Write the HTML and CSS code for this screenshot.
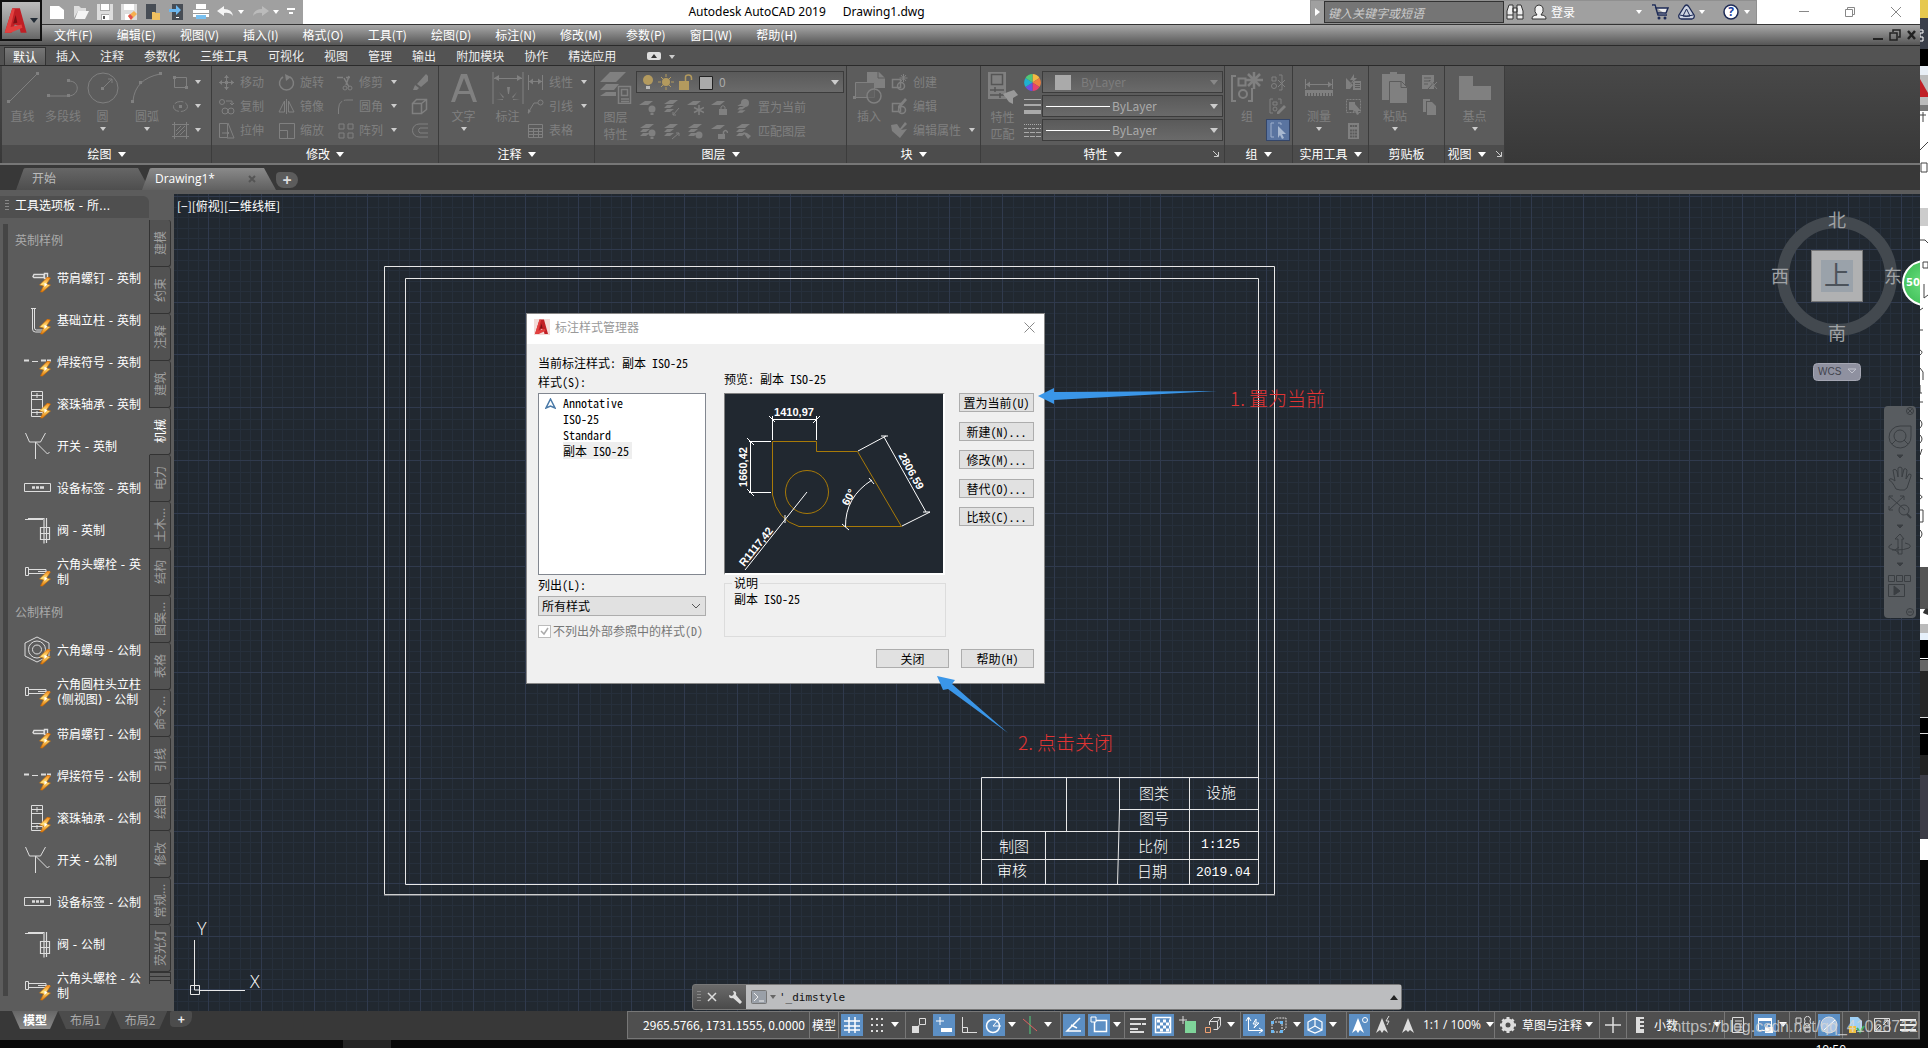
FILE: index.html
```html
<!DOCTYPE html>
<html lang="zh-CN">
<head>
<meta charset="utf-8">
<title>Autodesk AutoCAD 2019 - Drawing1.dwg</title>
<link rel="stylesheet" href="styles.css">
</head>
<body>
<svg class="defs" aria-hidden="true">
  <defs>
    <linearGradient id="gold" x1="0" y1="0" x2="0" y2="1"><stop offset="0" stop-color="#f08010"/><stop offset=".45" stop-color="#ffe27a"/><stop offset="1" stop-color="#e07808"/></linearGradient>
    <symbol id="bolt" viewBox="0 0 13 16"><path d="M9 0L1 8l4 1-3 6 2 0 8-7-4-1 4-6z" fill="url(#gold)" stroke="#c96a00" stroke-width=".6"/><path d="M6 6l3 1-3 3z" fill="#fff"/></symbol>
    <symbol id="screw" viewBox="0 0 28 28"><path d="M10 4.500h10v3H10l-1-1zM20.500 3.500h3v5h-3z" fill="none" stroke="#ddd" stroke-width="1.400"/></symbol>
    <symbol id="anchor" viewBox="0 0 28 28"><path d="M8.500 2v21q0 3 3 3h8M10.500 2v20q0 2 2 2h8M7 2.500h5" fill="none" stroke="#ddd"/></symbol>
    <symbol id="weld" viewBox="0 0 28 28"><path d="M0 12.500h5M17 12.500h5M23 12.500h4" stroke="#ddd" stroke-width="2" fill="none"/><path d="M8 13.500h6" stroke="#ddd"/></symbol>
    <symbol id="bearing" viewBox="0 0 28 28"><path d="M7.500 1.500h11v25h-11zM7.500 9.500h11M7.500 19.500h11M8 5.500h10M13 3v5M8 22.500h10M13 21v4" fill="none" stroke="#ddd"/></symbol>
    <symbol id="switch" viewBox="0 0 28 28"><path d="M1.500 1l4 9h11l5-9M11.500 10v17M11.500 10l12 12 2-2" fill="none" stroke="#ddd"/></symbol>
    <symbol id="tag" viewBox="0 0 28 28"><path d="M.500 9.500h26v8H.500z" fill="none" stroke="#ddd"/><path d="M8 13.500h3m1 0h3m1 0h4" stroke="#ddd" stroke-width="2.500"/></symbol>
    <symbol id="valve" viewBox="0 0 28 28"><path d="M1 3.500h18M4 2.500h16v25M22.500 2v25M16.500 11.500h9v12h-9zM16 17.500h10" fill="none" stroke="#ddd" stroke-width="1.200"/></symbol>
    <symbol id="hexbolt" viewBox="0 0 28 28"><path d="M1.500 9.500h3v8h-3zM4 11.500h18v4H4M14 13.500h12" fill="none" stroke="#ddd"/></symbol>
    <symbol id="nut" viewBox="0 0 28 28"><path d="M13 1l12 6v13l-12 6L1 20V7z" fill="none" stroke="#ddd"/><circle cx="13" cy="13.500" r="8.500" fill="none" stroke="#ddd"/><circle cx="13" cy="13.500" r="4.500" fill="none" stroke="#ddd"/></symbol>
    <symbol id="layers" viewBox="0 0 17 17"><path d="M7 1h8l-5 4H1zM4 6h7l-4 3H1zM4 10h7l-4 3H1z" fill="currentColor"/></symbol>
    <symbol id="layer1" viewBox="0 0 17 17"><path d="M6 2h8L9 6H0z" fill="currentColor"/></symbol>
    <symbol id="acad" viewBox="0 0 32 32"><path d="M11 1h9l8 29h-7l-2-8-5-2-4 10H2z" fill="#c01f25"/><path d="M11 1l3 1-5 21 13-3 1 4-14 6H2z" fill="#e2403f"/><path d="M15 9l2 9-5 1z" fill="#7b1015"/></symbol>
    <pattern id="grid" x="208" y="37" width="529" height="529" patternUnits="userSpaceOnUse">
      <path d="M11.500 0v529m10-529v529m11-529v529m10-529v529m22-529v529m10-529v529m11-529v529m10-529v529m22-529v529m10-529v529m11-529v529m10-529v529m22-529v529m10-529v529m11-529v529m10-529v529m22-529v529m10-529v529m11-529v529m10-529v529m22-529v529m10-529v529m11-529v529m10-529v529m22-529v529m10-529v529m11-529v529m10-529v529m22-529v529m10-529v529m11-529v529m10-529v529m22-529v529m10-529v529m11-529v529m10-529v529m22-529v529m10-529v529m11-529v529m10-529v529" stroke="#262f3b"/>
      <path d="M0 11.500h529m-529 10h529m-529 11h529m-529 10h529m-529 22h529m-529 10h529m-529 11h529m-529 10h529m-529 22h529m-529 10h529m-529 11h529m-529 10h529m-529 22h529m-529 10h529m-529 11h529m-529 10h529m-529 22h529m-529 10h529m-529 11h529m-529 10h529m-529 22h529m-529 10h529m-529 11h529m-529 10h529m-529 22h529m-529 10h529m-529 11h529m-529 10h529m-529 22h529m-529 10h529m-529 11h529m-529 10h529m-529 22h529m-529 10h529m-529 11h529m-529 10h529m-529 22h529m-529 10h529m-529 11h529m-529 10h529" stroke="#262f3b"/>
      <path d="M.500 0v529M53.500 0v529M106.500 0v529M159.500 0v529M212.500 0v529M265.500 0v529M317.500 0v529M370.500 0v529M423.500 0v529M476.500 0v529M0 .500h529M0 53.500h529M0 106.500h529M0 159.500h529M0 212.500h529M0 265.500h529M0 317.500h529M0 370.500h529M0 423.500h529M0 476.500h529" stroke="#303a4d"/>
    </pattern>
  </defs>
</svg>

<div class="desktop">
<div class="app">
  <header class="titlebar">
    <button class="appbtn" aria-label="应用程序"><svg width="27" height="30"><use href="#acad"/></svg><i class="car dark"></i></button>
    <div class="qat">
      <button aria-label="新建"><svg width="16" height="16"><path d="M1 2h9l5 4v9H1z" fill="#fff"/></svg></button>
      <button aria-label="打开"><svg width="16" height="16"><path d="M1 14V2h5l2 2h5v3H5z" fill="#ddd"/><path d="M5 7h11l-4 8H2z" fill="#f4f4f4"/></svg></button>
      <button aria-label="保存"><svg width="16" height="16"><path d="M0 0h16v16H0z" fill="#ddd"/><path d="M3 0h10v7H3zM4 10h8v6H4z" fill="#aaa"/><path d="M4 0h8v6H4zM5 11h7v5H5z" fill="#fff"/><path d="M6 12h2v3H6z" fill="#555"/></svg></button>
      <button aria-label="另存为"><svg width="16" height="16"><path d="M0 0h16v16H0z" fill="#ddd"/><path d="M3 0h10v6H3zM4 10h7v6H4z" fill="#fff"/><path d="M7 12l6-5 3 3-6 6z" fill="#f5b050"/><path d="M7 12l2-2 3 3-2 3z" fill="#e05050"/></svg></button>
      <button aria-label="从移动设备打开"><svg width="16" height="17"><path d="M1 0h10v15H1z" fill="#474d55"/><path d="M7 8h3l1 1h4v7H7z" fill="#f0c060"/></svg></button>
      <button aria-label="保存到移动设备"><svg width="16" height="17"><path d="M3 0h11v16H3z" fill="#474d55"/><path d="M0 5h7V1l5 5-5 5V8H0z" fill="#6db8f0"/><path d="M7 13h3v1H7z" fill="#fff"/></svg></button>
      <button aria-label="打印"><svg width="16" height="16"><path d="M3 0h10v5H3zM0 6h16v7H0z" fill="#fff"/><path d="M0 9h16v1H0z" fill="#999"/><path d="M3 11h10v4H3z" fill="#78c0f0"/></svg></button>
      <button aria-label="放弃"><svg width="17" height="12"><path d="M7 0v3q8 0 9 7-3-4-9-3v3L0 5z" fill="#f4f4f4"/></svg></button><i class="car"></i>
      <button aria-label="重做" class="dim"><svg width="17" height="12"><path d="M10 0v3q-8 0-9 7 3-4 9-3v3l7-5z" fill="#bbb"/></svg></button><i class="car"></i>
      <i class="more"></i>
    </div>
    <h1><span>Autodesk AutoCAD 2019</span><span>Drawing1.dwg</span></h1>
    <div class="infocenter">
      <i class="rcar"></i><input type="text" placeholder="键入关键字或短语" aria-label="搜索">
      <svg width="18" height="16" class="bino"><path d="M3 1h4v14H1V7zM11 1h4l2 6v8h-6zM7 4h4v4H7z" fill="#eee" stroke="#333"/><path d="M1 11h6M11 11h6" stroke="#333"/></svg>
      <svg width="16" height="16" class="user"><path d="M1 15q0-4 5-4-3-3-2-7 1-3 4-3t4 3q1 4-2 7 5 0 5 4z" fill="#f4f4f4" stroke="#333"/></svg>
      <button class="login">登录</button><i class="car"></i>
      <svg width="17" height="16" class="cart"><path d="M0 1h3l3 10h9M4 4h12l-2 5H6" fill="#eee" stroke="#1d2a55" stroke-width="1.500"/><circle cx="7" cy="14" r="1.500" fill="#1d2a55"/><circle cx="13" cy="14" r="1.500" fill="#1d2a55"/></svg>
      <svg width="17" height="16" class="a360"><path d="M6 3q2.500-4 5 0l5 8q1 3-2 4H3q-3-1-2-4z" fill="#cdd3e0" stroke="#1d2a55" stroke-width="1.300"/><path d="M8.500 5l3.500 7H5zM2 11q6 3 13 0" fill="none" stroke="#1d2a55"/></svg><i class="car"></i>
      <svg width="16" height="16" class="help"><circle cx="8" cy="8" r="7" fill="#fff" stroke="#1d2a55" stroke-width="1.500"/><text x="8" y="12" text-anchor="middle" font-size="12" font-weight="700" fill="#1d3fa0">?</text></svg><i class="car"></i>
    </div>
    <div class="wincontrols">
      <button aria-label="最小化"><svg width="12" height="12"><path d="M1 5.500h10" stroke="#888"/></svg></button>
      <button aria-label="还原"><svg width="12" height="12"><path d="M1.500 3.500h7v7h-7zM3.500 3V1.500h7v7H9" fill="none" stroke="#888"/></svg></button>
      <button aria-label="关闭"><svg width="12" height="12"><path d="M1 1l10 10M11 1L1 11" stroke="#888"/></svg></button>
    </div>
  </header>
  <nav class="menubar">
    <a href="#">文件(F)</a><a href="#">编辑(E)</a><a href="#">视图(V)</a><a href="#">插入(I)</a><a href="#">格式(O)</a><a href="#">工具(T)</a><a href="#">绘图(D)</a><a href="#">标注(N)</a><a href="#">修改(M)</a><a href="#">参数(P)</a><a href="#">窗口(W)</a><a href="#">帮助(H)</a>
    <svg class="docctl" width="46" height="12"><path d="M1 9h10v2H1z" fill="#222"/><path d="M18 4h7v7h-7zM21 3V1h7v7h-2" fill="none" stroke="#222" stroke-width="1.500"/><path d="M36 2l7 8M43 2l-7 8" stroke="#222" stroke-width="2.500"/></svg>
  </nav>
  <nav class="tabs">
    <a href="#" class="on">默认</a><a href="#">插入</a><a href="#">注释</a><a href="#">参数化</a><a href="#">三维工具</a><a href="#">可视化</a><a href="#">视图</a><a href="#">管理</a><a href="#">输出</a><a href="#">附加模块</a><a href="#">协作</a><a href="#">精选应用</a>
    <button aria-label="最小化功能区"><svg width="14" height="8"><rect width="14" height="8" rx="2" fill="#ddd"/><path d="M4 6l3-4 3 4z" fill="#333"/></svg></button><i class="car"></i>
  </nav>

  <section class="ribbon">
    <div class="panel p-draw"><div class="body">
      <button class="big"><svg width="32" height="32"><path d="M2 30L30 2" stroke="currentColor"/><path d="M0 28h3v3H0zM29 0h3v3h-3z" fill="currentColor"/></svg>直线</button>
      <button class="big"><svg width="32" height="32"><path d="M1 24h21c11-1 11-15 0-15" fill="none" stroke="currentColor"/><path d="M0 22h3v3H0zM20 22h3v3h-3zM20 7h3v3h-3z" fill="currentColor"/></svg>多段线</button>
      <button class="big"><svg width="32" height="32"><circle cx="16" cy="16" r="15" fill="none" stroke="currentColor"/><path d="M16 16l9-9m0 0h-4m4 0v4" fill="none" stroke="currentColor"/><path d="M14 15h3v3h-3z" fill="currentColor"/></svg>圆<i class="car"></i></button>
      <button class="big"><svg width="32" height="32"><path d="M2 29Q4 7 29 2" fill="none" stroke="currentColor"/><path d="M0 28h3v3H0zM8 9h3v3H8zM28 0h3v3h-3z" fill="currentColor"/></svg>圆弧<i class="car"></i></button>
      <div class="rows"><button aria-label="矩形"><svg width="17" height="17"><path d="M2.500 3.500h12v10h-12z" fill="none" stroke="currentColor"/><path d="M1 2h3v3H1zM13 12h3v3h-3z" fill="currentColor"/></svg><i class="car"></i></button>
      <button aria-label="椭圆"><svg width="17" height="17"><ellipse cx="8.500" cy="8.500" rx="7" ry="5" fill="none" stroke="currentColor" stroke-dasharray="9 2"/><path d="M7 7h3v3H7z" fill="currentColor"/></svg><i class="car"></i></button>
      <button aria-label="图案填充"><svg width="17" height="17"><path d="M2.500 0v17M14.500 0v17M0 2.500h17M0 14.500h17M4 9l5-5M4 13l9-9M8 13l5-5" stroke="currentColor"/></svg><i class="car"></i></button></div>
    </div><button class="plabel">绘图<i class="car w"></i></button></div>

    <div class="panel p-mod"><div class="body">
      <div class="rows">
        <button><svg width="17" height="17"><path d="M8.500 1v15M1 8.500h15" stroke="currentColor"/><path d="M6 4l2.500-3L11 4zM6 13l2.500 3 2.500-3zM4 6L1 8.500 4 11zM13 6l3 2.500-3 2.500zM7 7h3v3H7z" fill="currentColor"/></svg>移动</button>
        <button><svg width="17" height="17"><circle cx="4" cy="4" r="2.500" fill="none" stroke="currentColor"/><circle cx="7" cy="13" r="3" fill="none" stroke="currentColor"/><circle cx="13" cy="13" r="3" fill="none" stroke="currentColor"/><path d="M8 3h6v4m-2-2l2 2 2-2" fill="none" stroke="currentColor"/></svg>复制</button>
        <button><svg width="17" height="17"><path d="M1.500 1.500h8v14h-8zM10 1l6 15H9M4 11h7m-2-2l2 2-2 2" fill="none" stroke="currentColor"/></svg>拉伸</button></div>
      <div class="rows">
        <button><svg width="17" height="17"><path d="M5 3a7 7 0 1 0 7 0" fill="none" stroke="currentColor" stroke-width="1.500"/><path d="M7 0l6 3-5 4z" fill="currentColor"/></svg>旋转</button>
        <button><svg width="17" height="17"><path d="M6.500 3v11H1zM10.500 3v11H16z" fill="none" stroke="currentColor"/><path d="M8.500 1v15" stroke="currentColor"/></svg>镜像</button>
        <button><svg width="17" height="17"><path d="M1.500 1.500h15v15h-15zM1.500 8.500h8v8" fill="none" stroke="currentColor"/></svg>缩放</button></div>
      <div class="rows">
        <button><svg width="17" height="17"><path d="M0 3.500h6m3 0h4M7 4l5 9M12 2L9 11" stroke="currentColor" stroke-width="1.500"/><circle cx="8" cy="14" r="2" fill="none" stroke="currentColor"/><circle cx="13" cy="14" r="2" fill="none" stroke="currentColor"/></svg>修剪<i class="car"></i></button>
        <button><svg width="17" height="17"><path d="M1.500 16V11Q1.500 2 10 2h6" fill="none" stroke="currentColor" stroke-dasharray="14 2"/></svg>圆角<i class="car"></i></button>
        <button><svg width="17" height="17"><path d="M2 2h5v5H2zM11 2h5v5h-5zM2 11h5v5H2zM11 11h5v5h-5z" fill="none" stroke="currentColor"/></svg>阵列<i class="car"></i></button></div>
      <div class="rows">
        <button aria-label="删除"><svg width="17" height="17"><path d="M15 0l2 2v5l-7 6-4-3z" fill="currentColor"/><path d="M4 11l4 3-2 2H2z" fill="currentColor"/></svg></button>
        <button aria-label="分解"><svg width="17" height="17"><path d="M1.500 5.500h9v10h-9zM1.500 5.500l4-4h10v10l-5 4M10.500 5.500l5-4" fill="none" stroke="currentColor" stroke-width="1.500"/></svg></button>
        <button aria-label="偏移"><svg width="17" height="17"><path d="M17 2H8a6 6 0 0 0 0 13h9M17 6H9a3 3 0 0 0 0 5h8" fill="none" stroke="currentColor"/></svg></button></div>
    </div><button class="plabel">修改<i class="car w"></i></button></div>

    <div class="panel p-ann"><div class="body">
      <button class="big"><svg width="28" height="32"><path d="M11 2h6l10 28h-4l-3-8H8l-3 8H1zM14 6L9 19h10z" fill="currentColor" fill-rule="evenodd"/></svg>文字<i class="car"></i></button>
      <button class="big"><svg width="32" height="32"><path d="M1 0v32M31 0v32M2 6.500h28" stroke="currentColor"/><path d="M2 6l5-3v6zM30 6l-5-3v6zM15 15h3l-1 7h-1zM7 20l5 5-1 1zM25 20l-5 5 1 1zM4 28l7-1v1zM28 28l-7-1v1z" fill="currentColor"/></svg>标注</button>
      <div class="rows">
        <button><svg width="17" height="17"><path d="M1.500 1v15M15.500 1v15M2 7.500h13" stroke="currentColor"/><path d="M2 7.500l4-3v6zM15 7.500l-4-3v6z" fill="currentColor"/></svg>线性<i class="car"></i></button>
        <button><svg width="17" height="17"><path d="M1 15L7 5h4" fill="none" stroke="currentColor"/><path d="M1 16l0-5 3 2z" fill="currentColor"/><circle cx="13.500" cy="4.500" r="2.500" fill="none" stroke="currentColor"/></svg>引线<i class="car"></i></button>
        <button><svg width="17" height="17"><path d="M1.500 2.500h14v13h-14zM1 6.500h15M1 9.500h15M1 12.500h15M6.500 6v10M11.500 6v10" fill="none" stroke="currentColor"/></svg>表格</button></div>
    </div><button class="plabel">注释<i class="car w"></i></button></div>

    <div class="panel p-lay"><div class="body">
      <button class="big two"><svg width="34" height="32"><path d="M11 0h16L17 10H1zM7 12h13l-5 6H1zM7 20h10v4H1z" fill="currentColor"/><path d="M19.500 14.500h12v17h-12zM22.500 17.500h6v6h-6zM22 27h8M22 29.500h8" fill="#5c5c5c" stroke="currentColor" stroke-width="1.500"/></svg>图层<br>特性</button>
      <div class="laycol">
        <button class="combo layercombo"><svg width="70" height="17"><circle cx="7" cy="6" r="5" fill="#b39a5e"/><path d="M5 12h4v3H5z" fill="#bbb"/><circle cx="25" cy="8" r="4" fill="#b39a5e"/><path d="M25 0v3M25 13v3M17 8h3M30 8h3M20 3l2 2M28 11l2 2M20 13l2-2M28 5l2-2" stroke="#b39a5e"/><path d="M38 7h10v9H38z" fill="#b39a5e"/><path d="M44.500 7V3q0-2 3-2 3 0 3 3v2" fill="none" stroke="#b39a5e" stroke-width="1.500"/><path d="M58.500 2.500h13v13h-13z" fill="#aaa" stroke="#222"/></svg>0<i class="car big-c"></i></button>
        <div class="licons">
          <svg class="li"><use href="#layer1" width="17" height="17"/><circle cx="13" cy="10" r="3.500" fill="currentColor"/><path d="M11.500 14h3v2h-3z" fill="currentColor"/></svg><svg class="li"><use href="#layers" width="17" height="17"/><path d="M16 9l-6 7m0 0v-3m0 3h3" stroke="currentColor"/></svg><svg class="li"><use href="#layer1" width="17" height="17"/><path d="M12 6v10M7 8.500l10 5M17 8.500l-10 5" stroke="currentColor" stroke-width="1.500"/></svg><svg class="li"><use href="#layer1" width="17" height="17"/><path d="M8 10h8v6H8z" fill="currentColor"/><path d="M10 10V8q2-3 4 0v2" stroke="currentColor" fill="none"/></svg><svg class="li"><circle cx="10" cy="4" r="4" fill="currentColor"/><use href="#layers" y="3" width="17" height="14"/></svg><span>置为当前</span>
          <svg class="li"><use href="#layers" width="17" height="17"/><circle cx="13" cy="10" r="3.500" fill="currentColor"/><path d="M11.500 14h3v2h-3z" fill="currentColor"/></svg><svg class="li"><use href="#layers" width="17" height="17"/><path d="M9 16l7-6m0 0v3m0-3h-3" stroke="currentColor"/></svg><svg class="li"><use href="#layers" width="17" height="17"/><circle cx="12" cy="12" r="3.500" fill="currentColor"/></svg><svg class="li"><use href="#layer1" width="17" height="17"/><path d="M7 11h7v5H7z" fill="currentColor"/><path d="M12.500 11V9q2-3 4 0v1" stroke="currentColor" fill="none" stroke-width="1.500"/></svg><svg class="li"><use href="#layers" width="17" height="17"/><path d="M8 9l5 7 3-3-4-3z" fill="currentColor"/></svg><span>匹配图层</span>
        </div>
      </div>
    </div><button class="plabel">图层<i class="car w"></i></button></div>

    <div class="panel p-blk"><div class="body">
      <button class="big"><svg width="32" height="32"><path d="M14 0h12l6 6v10H14z" fill="currentColor"/><path d="M25 0v6h7" stroke="#5c5c5c" fill="none"/><path d="M2.500 10.500h19v15h-19z" fill="#666" stroke="currentColor"/><circle cx="21" cy="24" r="7" fill="#5c5c5c" fill-opacity=".6" stroke="currentColor" stroke-width="1.500"/><path d="M0 24h3v3H0z" fill="currentColor"/></svg>插入</button>
      <div class="rows">
        <button><svg width="17" height="17"><path d="M1.500 5.500h8v8h-8z" fill="none" stroke="currentColor" stroke-width="1.500"/><circle cx="10" cy="12" r="3.500" fill="none" stroke="currentColor" stroke-width="1.500"/><path d="M12.500 0v8M8.500 4h8M10 1l5 6M15 1l-5 6" stroke="currentColor"/></svg>创建</button>
        <button><svg width="17" height="17"><path d="M1.500 5.500h8v8h-8z" fill="none" stroke="currentColor" stroke-width="1.500"/><circle cx="11" cy="12" r="3.500" fill="none" stroke="currentColor" stroke-width="1.500"/><path d="M14 0l2 2-7 8-2 1 0-3z" fill="currentColor"/></svg>编辑</button>
        <button><svg width="17" height="17"><path d="M0 3l6-1 4 6 6-1-7 9-8-7z" fill="currentColor"/><path d="M14 0l2 2-6 6-2 0z" fill="currentColor"/></svg>编辑属性<i class="car"></i></button></div>
    </div><button class="plabel">块<i class="car w"></i></button></div>

    <div class="panel p-prop"><div class="body">
      <button class="big two"><svg width="32" height="32"><path d="M1 0h18v27H1z" fill="currentColor"/><path d="M4.500 2.500h11v10h-11zM3 18h14M3 23h14M8 15v5M13 21v5" fill="none" stroke="#555" stroke-width="1.500"/><path d="M27 18l4 5-5 3 0 6-4-2-6-8 5-2z" fill="#999"/></svg>特性<br>匹配</button>
      <div class="proprows">
        <svg width="17" height="17"><path d="M8.500 8.500V0a8.500 8.500 0 0 1 7 4z" fill="#f5b942"/><path d="M8.500 8.500l7-4.500a8.500 8.500 0 0 1 0 9z" fill="#f08040"/><path d="M8.500 8.500l7 4.500a8.500 8.500 0 0 1-7 4z" fill="#e8406a"/><path d="M8.500 8.500V17a8.500 8.500 0 0 1-7-4z" fill="#6a50e0"/><path d="M8.500 8.500l-7 4.500a8.500 8.500 0 0 1 0-9z" fill="#20b0d0"/><path d="M8.500 8.500L1.500 4a8.500 8.500 0 0 1 7-4z" fill="#50c878"/></svg>
        <button class="combo c1"><span class="sw2"></span>ByLayer<i class="car big-c"></i></button>
        <svg width="17" height="17"><path d="M0 1.500h17" stroke="#aaa"/><path d="M0 7h17" stroke="#aaa" stroke-width="2"/><path d="M0 14h17" stroke="#aaa" stroke-width="4"/></svg>
        <button class="combo c2"><span class="ln"></span>ByLayer<i class="car big-c"></i></button>
        <svg width="17" height="17"><path d="M0 2.500h17" stroke="#aaa" stroke-dasharray="1 1"/><path d="M0 6.500h17" stroke="#aaa" stroke-dasharray="3 1"/><path d="M0 10.500h17M0 14.500h17" stroke="#aaa" stroke-dasharray="5 1"/></svg>
        <button class="combo c2"><span class="ln"></span>ByLayer<i class="car big-c"></i></button>
      </div>
    </div><button class="plabel">特性<i class="car w"></i><svg class="launch" width="6" height="6"><path d="M0 0l5 5M5.500 1v4.500H1" fill="none" stroke="#ccc"/></svg></button></div>

    <div class="panel p-grp"><div class="body">
      <button class="big"><svg width="32" height="32"><path d="M5 4H1v25h4M17 29h4V16" fill="none" stroke="currentColor" stroke-width="2"/><path d="M7.500 6.500h7v7h-7z" fill="none" stroke="currentColor" stroke-width="2"/><circle cx="12" cy="22" r="4" fill="none" stroke="currentColor" stroke-width="2"/><path d="M23 0v17M15 8h17M17 2l12 12M29 2L17 14" stroke="currentColor" stroke-width="2.500"/></svg>组</button>
      <div class="rows">
        <button aria-label="解除编组"><svg width="17" height="17"><path d="M3 3h4v4H3zM10 1h3v15h-3" fill="none" stroke="currentColor"/><circle cx="5" cy="12" r="2.500" fill="none" stroke="currentColor"/><path d="M9 6l7 7M16 6l-7 7" stroke="currentColor"/></svg></button>
        <button aria-label="组编辑"><svg width="17" height="17"><path d="M4 1H1v14h3M9 1h3v5M4 4h4v3H4z" fill="none" stroke="currentColor"/><circle cx="6" cy="11" r="2" fill="none" stroke="currentColor"/><path d="M15 7l2 2-7 7H8v-2z" fill="currentColor"/></svg></button>
        <button class="hot" aria-label="组选择"><svg width="17" height="17"><path d="M4 1H1v14h3M8 1h3v2" fill="none" stroke="#9fb0cc"/><path d="M8 4l8 8-4 0 2 4-2 1-2-4-2 3z" fill="#a8b8d0"/></svg></button></div>
    </div><button class="plabel">组<i class="car w"></i></button></div>

    <div class="panel p-utl"><div class="body">
      <button class="big"><svg width="28" height="32"><path d="M.500 7v10M27.500 7v10M1 12.500h26" stroke="currentColor"/><path d="M1 12.500l4-3v6zM27 12.500l-4-3v6zM0 18h28v6H0z" fill="currentColor"/><path d="M2 22.500h25" stroke="#5c5c5c" stroke-dasharray="1 2" stroke-width="3"/></svg>测量<i class="car"></i></button>
      <div class="rows">
        <button aria-label="快速选择"><svg width="17" height="17"><path d="M9 0L5 6h3L5 11l7-7H9zM1 4l7 7-3 4-4 0zM8 7h8v9H8z" fill="currentColor"/><path d="M10 9.500h5M10 11.500h5M10 13.500h5" stroke="#5c5c5c"/></svg></button>
        <button aria-label="全部选择"><svg width="17" height="17"><path d="M1.500 1.500h14v13h-14z" fill="none" stroke="currentColor" stroke-dasharray="2 1"/><path d="M4 4h6v8H4zM9 5l7 8h-3l1 3-2 1-2-4-2 2z" fill="currentColor"/></svg></button>
        <button aria-label="计算器"><svg width="17" height="17"><path d="M3 1h11v16H3z" fill="currentColor"/><path d="M5 4h7M5 8.500h7M5 11.500h7M5 14.500h7" stroke="#5c5c5c" stroke-width="2" stroke-dasharray="2 .500"/></svg></button></div>
    </div><button class="plabel">实用工具<i class="car w"></i></button></div>

    <div class="panel p-clp"><div class="body">
      <button class="big"><svg width="28" height="32"><path d="M1 2h8V0h7v2h8v26H1z" fill="currentColor"/><path d="M8.500 9.500h12l6 6v16h-18z" fill="currentColor" stroke="#5c5c5c"/><path d="M20 9.500v6h6" fill="none" stroke="#5c5c5c"/></svg>粘贴<i class="car"></i></button>
      <div class="rows">
        <button aria-label="剪切"><svg width="17" height="17"><path d="M1 1h12v14H1z" fill="currentColor"/><path d="M3 4h7M3 7h7M3 10h4M8 6l8 9M15 6l-8 9" stroke="#5c5c5c"/><path d="M9 7l7 8M16 8l-7 7" stroke="currentColor"/></svg></button>
        <button aria-label="复制"><svg width="17" height="17"><path d="M2 1h7v2H5v11H2z" fill="currentColor"/><path d="M6 4h5l4 4v9H6z" fill="currentColor"/></svg></button></div>
    </div><div class="plabel">剪贴板</div></div>

    <div class="panel p-viw"><div class="body">
      <button class="big"><svg width="32" height="32"><path d="M0 4h14v10h18v14H0z" fill="currentColor"/></svg>基点<i class="car"></i></button>
    </div><button class="plabel">视图<i class="car w"></i><svg class="launch" width="6" height="6"><path d="M0 0l5 5M5.500 1v4.500H1" fill="none" stroke="#ccc"/></svg></button></div>
  </section>

  <nav class="filetabs">
    <a href="#" class="ft">开始</a><a href="#" class="ft on">Drawing1*<svg width="8" height="8"><path d="M1 1l6 6M7 1L1 7" stroke="#555" stroke-width="2"/></svg></a><button class="plus" aria-label="新图形">+</button>
  </nav>

  <main class="work">
    <aside class="palette">
      <div class="pmain">
        <h2><i class="grip"></i>工具选项板 - 所...</h2>
        <div class="plist">
          <h3>英制样例</h3>
          <ul>
            <li><svg><use href="#screw" y="6" width="28" height="28"/><use href="#bolt" x="14" y="13" width="14" height="16"/></svg>带肩螺钉 - 英制</li>
            <li><svg><use href="#anchor" width="28" height="28"/><use href="#bolt" x="14" y="13" width="14" height="16"/></svg>基础立柱 - 英制</li>
            <li><svg><use href="#weld" width="28" height="28"/><use href="#bolt" x="14" y="13" width="14" height="16"/></svg>焊接符号 - 英制</li>
            <li><svg><use href="#bearing" width="28" height="28"/><use href="#bolt" x="14" y="13" width="14" height="16"/></svg>滚珠轴承 - 英制</li>
            <li><svg><use href="#switch" width="28" height="28"/></svg>开关 - 英制</li>
            <li><svg><use href="#tag" width="28" height="28"/></svg>设备标签 - 英制</li>
            <li><svg><use href="#valve" width="28" height="28"/></svg>阀 - 英制</li>
            <li><svg><use href="#hexbolt" width="28" height="28"/><use href="#bolt" x="14" y="13" width="14" height="16"/></svg>六角头螺栓 - 英<br>制</li>
          </ul>
          <h3>公制样例</h3>
          <ul>
            <li><svg><use href="#nut" width="28" height="28"/><use href="#bolt" x="14" y="13" width="14" height="16"/></svg>六角螺母 - 公制</li>
            <li><svg><use href="#hexbolt" width="28" height="28"/><use href="#bolt" x="14" y="13" width="14" height="16"/></svg>六角圆柱头立柱<br>(侧视图) - 公制</li>
            <li><svg><use href="#screw" y="6" width="28" height="28"/><use href="#bolt" x="14" y="13" width="14" height="16"/></svg>带肩螺钉 - 公制</li>
            <li><svg><use href="#weld" width="28" height="28"/><use href="#bolt" x="14" y="13" width="14" height="16"/></svg>焊接符号 - 公制</li>
            <li><svg><use href="#bearing" width="28" height="28"/><use href="#bolt" x="14" y="13" width="14" height="16"/></svg>滚珠轴承 - 公制</li>
            <li><svg><use href="#switch" width="28" height="28"/></svg>开关 - 公制</li>
            <li><svg><use href="#tag" width="28" height="28"/></svg>设备标签 - 公制</li>
            <li><svg><use href="#valve" width="28" height="28"/></svg>阀 - 公制</li>
            <li><svg><use href="#hexbolt" width="28" height="28"/><use href="#bolt" x="14" y="13" width="14" height="16"/></svg>六角头螺栓 - 公<br>制</li>
          </ul>
        </div>
      </div>
      <div class="vtabs">
        <button>建模</button><button>约束</button><button>注释</button><button>建筑</button><button class="on">机械</button><button>电力</button><button>土木...</button><button>结构</button><button>图案...</button><button>表格</button><button>命令...</button><button>引线</button><button>绘图</button><button>修改</button><button>常规...</button><button>荧光灯</button><i></i><i></i><i></i>
      </div>
    </aside>

    <section class="canvas">
      <svg class="drawing">
        <g transform="translate(-174 -194)">
          <rect x="174" y="194" width="100%" height="100%" fill="url(#grid)"/>
          <g fill="none" stroke="#e8e8e8">
            <path d="M384.500 266.500h890v628h-890z"/><path d="M384 895h891" stroke="#b4b4b4"/>
            <path d="M405.500 278.500h853v606h-853z"/>
            <path d="M981.500 777.500h277M981.500 777.500v107M1066.500 778v53M1119.500 778v31l-2 76M1189.500 778v107M1119 809.500h139M982 831.500h276M982 859.500h276M1045.500 831v54"/>
            <path d="M194.500 940v45M200 990.500h45M190.500 985.500h9v9h-9zM194.500 985v5h5"/>
          </g>
          <g class="cadtext">
            <text x="1139" y="799">图类</text><text x="1206" y="798">设施</text><text x="1139" y="824">图号</text><text x="999" y="852">制图</text><text x="1138" y="852">比例</text><text x="997" y="876">审核</text><text x="1137" y="877">日期</text>
            <text x="1201" y="848" class="m">1:125</text><text x="1196" y="876" class="m">2019.04</text>
            <text x="197" y="935" class="axis">Y</text><text x="250" y="988" class="axis">X</text>
            <text x="177" y="211" class="vp">[−][俯视][二维线框]</text>
          </g>
        </g>
      </svg>

      <div class="viewcube">
        <svg width="140" height="180">
          <circle cx="66" cy="66" r="54" fill="none" stroke="#43494f" stroke-width="12"/>
          <rect x="40.500" y="40.500" width="51" height="51" fill="#b0b1b2" stroke="#777"/><rect x="50" y="50" width="32" height="32" fill="#9aa2aa"/>
          <g class="cube"><text x="66" y="17">北</text><text x="9" y="73">西</text><text x="122" y="73">东</text><text x="66" y="130">南</text><text x="66" y="75" class="top">上</text></g>
          <rect x="42.500" y="153.500" width="47" height="17" rx="4" fill="#8f91a0" stroke="#a5a7b3"/><text x="47" y="165" class="wcs">WCS</text><path d="M77 159h8l-4 4z" fill="none" stroke="#c0c2cc"/>
        </svg>
      </div>
      <div class="ball"><span>50</span></div>
      <div class="navbar">
        <svg width="32" height="212" fill="none" stroke="#3a3e42">
          <circle cx="26" cy="5" r="3.500"/><path d="M24 3l4 4M28 3l-4 4"/>
          <path d="M16 20h11v10a11 11 0 1 1-11-10z"/><circle cx="16" cy="30" r="6"/><path d="M8 38l4-4M24 38l-4-4"/><path d="M13 49h6l-3 3z" fill="#3a3e42"/>
          <path d="M12 83q-4-8-7-9 1-3 6 1l-2-11q2-2 4 1l1 6V62q2-2 4 0v9l2-8q2-1 3 1l-1 9 3-5q3 0 2 2l-4 12q-2 3-7 2z"/>
          <path d="M5 90l16 14M20 90L5 104M5 94v-4h4M16 90h4v4M5 100v4h4"/><circle cx="20" cy="104" r="5"/><path d="M23 108l4 4" stroke-width="2"/><path d="M13 119h6l-3 3z" fill="#3a3e42"/>
          <path d="M14 148v-15h-3l5-5 4 5h-2v15zM8 138q-8 4 3 6h-3M21 137q8 2 4 5-4 2-14 2m4-3l-4 3 4 3"/><path d="M13 157h6l-3 3z" fill="#3a3e42"/>
          <path d="M4.500 169.500h6v6h-6zM12.500 169.500h6v6h-6zM20.500 169.500h6v6h-6zM4.500 178.500h16v12h-16z"/><path d="M10 180v9l6-4z" fill="#3a3e42"/><circle cx="26" cy="206" r="3.500"/><path d="M24 206h4"/>
        </svg>
      </div>

      <div class="cmdline">
        <i class="grip"></i><button aria-label="关闭"><svg width="10" height="10"><path d="M1 1l8 8M9 1L1 9" stroke="#ddd" stroke-width="1.500"/></svg></button>
        <button aria-label="自定义"><svg width="15" height="15"><path d="M1 5q0 4 4 3l7 6 2-2-6-7q1-4-3-4l1 3-2 2z" fill="#ddd"/></svg></button>
        <div class="cmdbody"><svg width="16" height="14"><rect x=".500" y=".500" width="15" height="13" rx="1" fill="#9aa0a8" stroke="#777"/><path d="M3 3l4 4-4 4M8 11h5" fill="none" stroke="#eee"/></svg><i class="car mid"></i><input type="text" value="'_dimstyle" aria-label="命令"><i class="ucar"></i></div>
      </div>

      <section class="dialog">
        <header><svg width="16" height="16"><rect width="16" height="16" fill="#f3dcd9"/><use href="#acad" width="16" height="16"/></svg><h2>标注样式管理器</h2><button class="x" aria-label="关闭"><svg width="11" height="11"><path d="M.500.500l10 10M10.500.500l-10 10" stroke="#888"/></svg></button></header>
        <div class="dbody">
          <div class="col1">
            <p>当前标注样式: 副本 ISO-25</p>
            <p id="stl">样式(S):</p>
            <ul class="list" aria-labelledby="stl"><li><svg width="11" height="11"><path d="M5.500 1l4.500 9-4.500-2L1 10z" fill="none" stroke="#4a7aa8" stroke-width="1.500"/></svg>Annotative</li><li>ISO-25</li><li>Standard</li><li><span>副本 ISO-25</span></li></ul>
            <label for="lst">列出(L):</label>
            <select id="lst"><option>所有样式</option></select>
            <label class="chk"><input type="checkbox" checked disabled>不列出外部参照中的样式(D)</label>
          </div>
          <div class="col2">
            <p>预览: 副本 ISO-25</p>
            <div class="preview"><svg width="218" height="178">
              <g fill="none" stroke="#a87a08"><path d="M47.500 101V47.500h44v10h41l44 75H74Q52 126 47.500 101"/><circle cx="82" cy="98" r="21.500"/></g>
              <g fill="none" stroke="#fff"><path d="M47.500 46V22M91.500 46V22M47 25.500h45M88 29l7-7M44 22l6 6M46 47.500H24M46 98.500H24M25.500 47v52M22 44l7 7M22 95l7 7M133 57l28-15M177 132l28-14M159 43l42 75M156 42h7M198 118h7M82 98L20 176M120.500 133Q120 103 147 86M117 130l7 6M144 84l5 6M60 121v8"/></g>
              <g class="dim"><text x="69" y="22">1410,97</text><text transform="translate(22 73) rotate(-90)">1660,42</text><text transform="translate(183 79) rotate(61)">2806,59</text><text transform="translate(127 105) rotate(-62)">60°</text><text transform="translate(34 155) rotate(-51)">R1117,42</text></g>
            </svg></div>
            <fieldset><legend>说明</legend>副本 ISO-25</fieldset>
          </div>
          <div class="col3"><button>置为当前(U)</button><button>新建(N)...</button><button>修改(M)...</button><button>替代(O)...</button><button>比较(C)...</button></div>
        </div>
        <footer><button>关闭</button><button>帮助(H)</button></footer>
      </section>

      <svg class="notes">
        <g transform="translate(-174 -194)">
          <path d="M1038 396l16-8v4l163-1-163 9v4z" fill="#3a96e8"/>
          <path d="M937 676l18 4-3 4 56 49-60-44-5 1z" fill="#3a96e8"/>
          <text x="1230" y="406">1.</text><text x="1249" y="406">置为当前</text>
          <text x="1018" y="750">2.</text><text x="1037" y="750">点击关闭</text>
        </g>
      </svg>
    </section>
  </main>

  <footer class="bottom">
    <nav class="layouts"><a href="#" class="on">模型</a><a href="#">布局1</a><a href="#">布局2</a><button aria-label="新布局">+</button></nav>
    <div class="status">
      <span class="cell coords">2965.5766, 1731.1555, 0.0000</span>
      <button class="cell model">模型</button>
      <div class="cell g1"><b><svg><path d="M6 1v16M12 1v16M1 5h16M1 10h16M1 14h16" stroke="#fff" stroke-width="1.500"/></svg></b><b class="off"><svg><path d="M3 3h13M3 9h13M3 15h13" stroke="#ddd" stroke-width="2" stroke-dasharray="2 3"/></svg></b><i class="car w"></i></div>
      <div class="cell g2"><b class="off"><svg><path d="M2 10h7v7H2z" fill="#ddd"/><path d="M9.500 2.500h6v6h-6zM9 9L8 13" fill="none" stroke="#ddd"/></svg></b><b><svg><path d="M5 1v8M1 5h8" stroke="#fff"/><path d="M6 12h11v4H6z" fill="#fff"/></svg></b><b class="off"><svg><path d="M2.500 1v15.500H17M2.500 11.500h5v5" fill="none" stroke="#ddd"/></svg></b><b><svg><circle cx="8" cy="10" r="6.500" fill="none" stroke="#fff" stroke-width="1.500"/><path d="M8 10h8M8 10l7-8" stroke="#fff"/></svg></b><i class="car w"></i><b class="off"><svg><path d="M9 0v18" stroke="#50d080"/><path d="M2 3l14 12" stroke="#e06060"/></svg></b><i class="car w"></i></div>
      <div class="cell g3"><b><svg><path d="M15 2L2 15h14M6 9l6 3" fill="none" stroke="#fff" stroke-width="1.500"/></svg></b><b><svg><path d="M4.500 4.500h12v11h-12z" fill="none" stroke="#fff" stroke-width="1.500"/><path d="M1 1h5v5H1z" fill="#5c8fc4" stroke="#fff"/></svg></b><i class="car w"></i></div>
      <div class="cell g4"><b class="off"><svg><path d="M1 3h16M1 8h11m1 0h4M1 13h8M1 16h14" stroke="#ddd" stroke-width="2"/></svg></b><b><svg><path d="M1.500 1.500h15v15h-15z" fill="none" stroke="#fff" stroke-width="1.500"/><path d="M3 5h13M3 11h13" stroke="#fff" stroke-width="3" stroke-dasharray="3 3"/><path d="M6 8h10M6 14h10" stroke="#fff" stroke-width="3" stroke-dasharray="3 3"/></svg></b><b class="off"><svg><path d="M6 5h11v12H6z" fill="#7fd49a"/><path d="M4 0v8M0 4h8" stroke="#ddd"/></svg></b><b class="off"><svg><path d="M5.500 5.500h8v8h-4M5.500 9V5.500l4-4h7v8l-3 4M13.500 5.500l3-4" fill="none" stroke="#ddd"/><path d="M1.500 11.500h5v5h-5z" fill="none" stroke="#f0a070"/></svg></b><i class="car w"></i></div>
      <div class="cell g5"><b><svg><path d="M3.500 2v12.500H17M1 5l2.500-4L6 5M14 12l4 2.500-4 2.500M11 3L8 8h3l-2 4 5-5h-3z" fill="none" stroke="#fff"/></svg></b><b class="off"><svg><path d="M2 6h10v10H2zM2 6l4-4h10v10l-4 4" fill="none" stroke="#ddd" stroke-dasharray="2 1"/><path d="M1 5h3v3H1zM10 5h3v3h-3zM1 14h3v3H1zM10 14h3v3h-3z" fill="#6db8f0"/></svg></b><i class="car w"></i><b><svg><path d="M9 2l7 4v8l-7 3-7-3V6zM9 2v8l-7 4M9 10l7 4" fill="none" stroke="#fff" stroke-width="1.200"/></svg></b><i class="car w"></i></div>
      <div class="cell g6"><b><svg><path d="M7 2l6 15-4-3-2 3-2-3-4 3z" fill="#fff"/><circle cx="14" cy="4" r="2.500" fill="none" stroke="#fff"/></svg></b><b class="off"><svg><path d="M7 2l6 15-4-3-2 3-2-3-4 3z" fill="#ddd"/><path d="M14 0l-3 5h3l-2 4" fill="none" stroke="#ddd"/></svg></b><b class="off"><svg><path d="M9 2l6 15-4-3-2 2-2-2-4 3z" fill="#ddd"/></svg></b><span>1:1 / 100%</span><i class="car w"></i></div>
      <div class="cell g7"><b class="off"><svg><circle cx="9" cy="9" r="4.500" fill="none" stroke="#ddd" stroke-width="4"/><path d="M9 1v3M9 14v3M1 9h3M14 9h3M3.500 3.500l2 2M12.500 12.500l2 2M3.500 14.500l2-2M12.500 5.500l2-2" stroke="#ddd" stroke-width="3"/></svg></b><span>草图与注释</span><i class="car w"></i></div>
      <div class="cell g8"><b class="off"><svg><path d="M9 1v16M1 9h16" stroke="#ddd" stroke-width="1.500"/></svg></b></div>
      <div class="cell g9"><b class="off"><svg><path d="M5 1h8v2h-4v2h4v2h-4v2h4v2h-4v2h4v4H5z" fill="#ddd"/></svg></b><span>小数</span><i class="car w"></i></div>
      <div class="cell g10"><b class="off"><svg><path d="M3.500 1.500h11v15h-11zM6 5h7M6 8h7M6 11h7M6 14h7" fill="none" stroke="#ddd"/></svg></b></div>
      <div class="cell g11"><b><svg><path d="M2.500 2.500h13v12h-13z" fill="none" stroke="#fff"/><path d="M2 2h14v3H2zM9 11h8v6H9z" fill="#fff"/><path d="M11 11V9q2-2 4 0v2" stroke="#fff" fill="none"/></svg></b><i class="car w"></i></div>
      <div class="cell g12"><b class="off"><svg><path d="M2 2h5v5H2zM11 11h5v5h-5zM11 5a3 3 0 1 0 5 0 3 3 0 1 0-5 0M4 16l3-4" fill="none" stroke="#ddd"/></svg></b></div>
      <div class="cell g13"><b><svg><circle cx="9" cy="9" r="8" fill="#a9c4e4" stroke="#ddd"/><path d="M4 14L15 4" stroke="#fff"/></svg></b></div>
      <div class="cell g14"><b class="off"><svg><path d="M3 1h8l4 4v9H3z" fill="#9fd0f5"/><path d="M2 10h7v7H2z" fill="#f0c040"/><path d="M10 12l3 4 4-6" stroke="#40b060" stroke-width="2" fill="none"/></svg></b></div>
      <div class="cell g15"><b class="off"><svg><path d="M1.500 2.500h15v13h-15zM10 9l5-5m0 0h-4m4 0v4M8 9l-5 5m0 0h4m-4 0v-4" fill="none" stroke="#ddd"/></svg></b><b class="off"><svg><path d="M2 4h16M2 9h16M2 14h16" stroke="#eee" stroke-width="2"/></svg></b></div>
      <span class="watermark">https://blog.csdn.net/qq_41068712</span>
    </div>
  </footer>
</div>
<div class="behind"><svg width="8" height="700"><path d="M0 30h3v3H0v4h3v4H0" fill="none" stroke="#fff"/><path d="M0 79l8 14v4H0z" fill="#c01f25"/><path d="M0 115h6M3 112v10M0 150l8-8M1 163h6v9H1zM0 240h5l3 3M3 262h5v6H3zM4 284v14l4-3M0 310l3-2M0 330h3M0 350q4 2 0 5M0 368l3 4v8M0 385v8h2M0 402h3M0 420q4 4 0 8M0 435q4 4 0 8M0 455l2-6M0 478l3 1M0 495q4 2 0 4M0 510h3v12H0M0 530q4 4 0 8" fill="none" stroke="#444"/><path d="M0 658.500h8" stroke="#fff"/><path d="M3 613q2-6 5-4v6z" fill="#333"/></svg></div>
</div>
<div class="taskbar"><i></i><span>10:50</span></div>
</body>
</html>
```

FILE: styles.css
```css
* { box-sizing: border-box; }
body { margin: 0; min-height: 100vh; display: flex; flex-direction: column; background: #000; color: #eee; font: 12px/16px "Open Sans", "Noto Sans CJK SC", sans-serif; overflow: hidden; }
button { font: inherit; color: inherit; background: none; border: 0; padding: 0; margin: 0; }
a { color: inherit; text-decoration: none; }
h1, h2, h3, p, ul { margin: 0; padding: 0; font-size: 12px; font-weight: 400; list-style: none; }
svg { display: block; flex: none; }
.defs { position: absolute; width: 0; height: 0; }
.car { flex: none; display: block; width: 0; height: 0; border: 3px solid transparent; border-top: 4px solid #ccc; border-bottom: 0; }
.car.w { border-width: 4px; border-top: 5px solid #fff; border-bottom: 0; }
.car.dark { border-width: 4px; border-top: 5px solid #222b35; border-bottom: 0; }
.car.mid { border-top-color: #666; }
.desktop { flex: 1; display: flex; }
.app { flex: 1; min-width: 0; display: flex; flex-direction: column; background: #383838; }

/* title bar */
.titlebar { height: 24px; background: #fff; display: flex; align-items: center; position: relative; font-family: "Noto Sans CJK SC", sans-serif; }
.appbtn { position: absolute; z-index: 2; left: 0; top: 0; width: 42px; height: 41px; border: 2px solid #111; background: linear-gradient(#bbb, #999 50%, #666); display: flex; align-items: center; gap: 0; padding-left: 1px; }
.qat { margin-left: 42px; width: 261px; height: 24px; background: #a0a0a0; display: flex; align-items: center; padding-left: 7px; gap: 8px; }
.qat .car { border-top-color: #fff; margin-left: -4px; }
.qat .more { width: 8px; height: 8px; border-top: 2px solid #fff; background: linear-gradient(#fff, #fff) center / 4px 2px no-repeat; }
h1 { flex: 1; display: flex; gap: 17px; justify-content: center; color: #000; font-family: "Noto Sans", "Open Sans", sans-serif; }
.infocenter { width: 447px; height: 24px; background: #a0a0a0; display: flex; align-items: center; color: #fff; border: 1px solid #909090; }
.rcar { margin: 0 4px; border: 4px solid transparent; border-left: 5px solid #fff; border-right: 0; }
.infocenter input { width: 180px; height: 22px; border: 1px solid #333; background: #757575; font: italic 12px "Noto Sans CJK SC"; padding: 0 3px; margin-right: 2px; flex: none; }
.infocenter input::placeholder { color: #ccc; opacity: 1; }
.user { margin: 0 4px 0 7px; }
.infocenter .car { border-top-color: #fff; }
.login { margin-right: 61px; white-space: nowrap; }
.cart { margin-left: 10px; }
.a360 { margin: 0 4px 0 9px; }
.help { margin: 0 5px 0 18px; }
.help text { font-family: "Open Sans"; }
.wincontrols { width: 163px; display: flex; justify-content: flex-end; gap: 34px; padding-right: 18px; }
.menubar { height: 22px; background: linear-gradient(#a8a8a8, #555); border-top: 1px solid #333; border-bottom: 1px solid #2a2a2a; display: flex; align-items: center; gap: 24px; padding-left: 54px; color: #fff; font-family: "Noto Sans CJK SC", sans-serif; line-height: 18px; }
.docctl { margin-left: auto; margin-right: 2px; }
.tabs { height: 20px; background: #535353; border-bottom: 1px solid #2b2b2b; display: flex; align-items: flex-end; padding-left: 4px; font-family: "Noto Sans CJK SC", sans-serif; }
.tabs a { padding: 0 10px; height: 18px; line-height: 18px; }
.tabs a.on { width: 42px; padding: 0 8px; background: linear-gradient(#777, #5c5c5c); border: 1px solid #333; border-bottom: 0; color: #fff; }
.tabs button { margin: 0 8px 5px 21px; }
.tabs .car { margin-bottom: 6px; }

/* ribbon */
.ribbon { height: 99px; display: flex; padding-left: 2px; background: linear-gradient(#484848, #383838); border-bottom: 2px solid #777; font-family: "Noto Sans CJK SC", sans-serif; }
.panel { display: flex; flex-direction: column; border-right: 1px solid #3c3c3c; background: #5c5c5c; }
.body { flex: 1; display: grid; padding-top: 4px; align-items: start; }
.big { display: flex; flex-direction: column; align-items: center; padding-top: 2px; }
.big svg { margin-bottom: 4px; }
.big .car { margin-top: 3px; }
.big.two { display: block; text-align: center; line-height: 17px; }
.big.two svg { margin: 0 auto 4px; }
.big, .rows button { color: #808080; }
.rows { display: grid; grid-auto-rows: 24px; align-items: center; }
.rows button { display: flex; align-items: center; gap: 5px; height: 22px; }
.rows .car { margin-left: 3px; }
.plabel { height: 18px; background: #4c4c4c; color: #fff; display: flex; align-items: center; justify-content: center; gap: 6px; width: 100%; }
.launch { margin-left: 4px; }
.p-draw { width: 210px; } .p-draw .body { grid-template-columns: 41px 40px 39px 50px 1fr; }
.p-draw .rows button { gap: 3px; }
.p-mod { width: 227px; } .p-mod .body { grid-template-columns: 60px 59px 74px 1fr; padding-left: 6px; }
.p-ann { width: 156px; } .p-ann .body { grid-template-columns: 49px 39px 1fr; }
.p-lay { width: 252px; } .p-lay .body { grid-template-columns: 41px 1fr; }
.p-blk { width: 134px; } .p-blk .body { grid-template-columns: 44px 1fr; }
.p-prop { width: 244px; } .p-prop .body { grid-template-columns: 43px 1fr; }
.p-prop .plabel, .p-viw .plabel { position: relative; }
.p-prop .launch { position: absolute; right: 5px; }
.p-grp { width: 68px; } .p-grp .body { grid-template-columns: 44px 1fr; }
.p-utl { width: 76px; } .p-utl .body { grid-template-columns: 52px 1fr; }
.p-clp { width: 76px; } .p-clp .body { grid-template-columns: 52px 1fr; }
.p-viw { width: 60px; }
.rows .hot { width: 24px; padding-left: 3px; margin-left: -3px; background: #5a74a0; border: 1px solid #34466a; }
.combo { display: flex; align-items: center; width: 100%; height: 22px; border: 1px solid #3c3c3c; background: linear-gradient(#5a5a5a, #6a6a6a); color: #aaa; }
.combo .car { margin: 0 4px 0 auto; border-width: 4px; border-top: 5px solid #ccc; border-bottom: 0; }
.layercombo { width: 208px; padding-left: 4px; margin-top: 1px; }
.layercombo svg { width: 78px; }
.laycol { display: grid; gap: 2px; }
.licons { display: grid; grid-template-columns: 24px 24px 24px 24px 23px 1fr; grid-auto-rows: 24px; padding-left: 3px; align-items: center; color: #808080; }
.li { width: 17px; height: 17px; }
.proprows { display: grid; grid-template-columns: 18px 181px; grid-auto-rows: 24px; align-items: center; }
.proprows .c1 { color: #7d7d7d; }
.proprows .c1 .car { border-top-color: #888; }
.sw2 { width: 16px; height: 15px; background: #aaa; margin: 0 10px 0 12px; }
.ln { width: 64px; height: 1px; background: #fff; margin: 0 2px 0 3px; }

/* file tabs */
.filetabs { height: 29px; background: #383838; border-bottom: 4px solid #5c5c5c; padding: 3px 0 0 16px; display: flex; align-items: stretch; }
.ft { width: 134px; height: 22px; border-radius: 10px 12px 0 0; background: linear-gradient(#666, #4e4e4e); color: #bbb; padding: 3px 0 0 16px; display: flex; clip-path: polygon(8px 0, 122px 0, 134px 100%, 0 100%); font-family: "Open Sans", "Noto Sans CJK SC"; }
.ft.on { margin-left: -8px; background: linear-gradient(#8a8a8a, #606060); color: #fff; justify-content: space-between; padding-left: 13px; padding-right: 20px; }
.ft.on svg { margin-top: 4px; }
.plus { width: 22px; height: 16px; margin: 4px 0 0 0; background: #5c5c5c; border-radius: 4px 8px 8px 8px; color: #ddd; font-weight: 700; font-size: 16px; line-height: 14px; }

/* palette */
.work { flex: 1; display: flex; background: #5c5c5c; min-height: 0; }
.palette { width: 174px; display: flex; font-family: "Noto Sans CJK SC", sans-serif; }
.pmain { width: 149px; }
.pmain h2 { margin-top: 2px; height: 22px; background: #4f4f4f; border-radius: 0 6px 0 0; color: #fff; display: flex; align-items: center; gap: 6px; padding: 0 0 3px 5px; }
.grip { width: 4px; height: 12px; background: repeating-linear-gradient(#888 0 1px, transparent 1px 3px); }
.plist { margin: 6px 0 0 3px; border-left: 5px solid #454545; height: 772px; }
.plist h3 { color: #aaa; height: 36px; padding: 8px 0 0 7px; }
.plist li { height: 42px; display: flex; align-items: center; color: #fff; line-height: 15px; padding-left: 16px; gap: 4px; white-space: nowrap; }
.plist li, .pmain h2 { font-family: "DejaVu Sans", "Noto Sans CJK SC", sans-serif; }
.plist li svg { width: 29px; height: 30px; }
.plist ul { margin-top: -2px; margin-bottom: 2px; }
.vtabs { width: 22px; margin-top: 26px; }
.vtabs button { display: flex; justify-content: center; align-items: center; width: 22px; height: 47px; border: 1px solid #333; border-width: 1px 1px 0 1px; border-radius: 3px 0 0 3px; color: #a0a0a0; background: #525252; writing-mode: vertical-rl; text-orientation: sideways; transform: rotate(180deg); white-space: nowrap; }
.vtabs .on { background: #5c5c5c; color: #fff; border-right-color: #5c5c5c; }
.vtabs i { display: block; height: 4px; border: 1px solid #333; border-width: 1px 1px 0 1px; }

/* canvas */
.canvas { flex: 1; position: relative; background: #212830; overflow: hidden; min-height: 817px; }
.drawing, .notes { position: absolute; left: 0; top: 0; width: 100%; height: 100%; }
.notes { z-index: 3; pointer-events: none; }
.notes text { font: 300 19px "Noto Sans CJK SC"; fill: #e03434; }
.cadtext text { font: 300 15px "Noto Sans CJK SC"; fill: #fff; }
.cadtext .m { font: 13px "Liberation Mono"; }
.cadtext .axis { font: 300 18px "Open Sans"; }
.cadtext .vp { font: 12px "Noto Sans CJK SC"; }
.viewcube { position: absolute; right: 9px; top: 16px; }
.viewcube svg { overflow: visible; }
.cube text { font: 18px "Noto Sans CJK SC"; fill: #a0a3a6; text-anchor: middle; }
.cube .top { font-size: 26px; fill: #4c535b; }
.wcs { font: 10px "Liberation Sans"; fill: #41434d; }
.ball { position: absolute; right: -28px; top: 66px; width: 46px; height: 46px; border-radius: 50%; background: radial-gradient(#6be080, #38b850); border: 2px solid #fff; color: #fff; font: 700 10px/42px "DejaVu Sans"; padding-left: 2px; }
.navbar { position: absolute; right: 4px; top: 212px; width: 32px; height: 212px; border-radius: 4px; background: #585c60; }
.cmdline { position: absolute; left: 518px; bottom: 1px; width: 710px; height: 26px; display: flex; align-items: center; background: linear-gradient(#6a6a6a, #4a4a4a); border: 1px solid #777; border-radius: 3px; padding-left: 4px; gap: 6px; }
.cmdline button + button { margin-left: 5px; }
.cmdbody { flex: 1; height: 24px; display: flex; align-items: center; gap: 3px; background: #bcbdbf; padding: 0 3px 0 5px; margin-left: -3px; }
.cmdbody input { flex: 1; border: 0; background: none; padding: 0; font: 11px "DejaVu Sans Mono"; color: #111; }
.ucar { border: 4px solid transparent; border-bottom: 5px solid #222; border-top: 0; }

/* dialog */
.dialog { position: absolute; z-index: 2; left: 352px; top: 119px; width: 519px; height: 371px; background: #f0f0f0; color: #000; border: 1px solid #888; font: 12px/16px "Noto Sans Mono CJK SC", "Noto Sans CJK SC", monospace; }
.dialog header { height: 30px; background: #fff; display: flex; align-items: center; gap: 5px; padding: 0 9px 4px 7px; }
.dialog header h2 { flex: 1; color: #999; font-family: "Noto Sans CJK SC"; }
.dbody { display: grid; grid-template-columns: 168px 222px 75px; column-gap: 18px; padding: 11px 0 0 11px; justify-content: start; }
.col1 { display: flex; flex-direction: column; white-space: nowrap; }
.col1 p { height: 19px; }
.list { height: 182px; border: 1px solid #828790; background: #fff; padding: 1px 0 0 24px; }
.list li { position: relative; }
.list li svg { position: absolute; left: -18px; top: 3px; }
.list span { background: #eee; padding-right: 3px; }
.col1 label { margin-top: 2px; }
.col1 select { appearance: none; height: 20px; margin-top: 3px; font: inherit; line-height: 16px; color: #000; border: 1px solid #adadad; border-radius: 0; padding: 0 0 0 3px; background: #e1e1e1 url("data:image/svg+xml,%3Csvg xmlns='http://www.w3.org/2000/svg' width='10' height='6'%3E%3Cpath d='M1 1l4 4 4-4' fill='none' stroke='%23555'/%3E%3C/svg%3E") no-repeat right 4px center; }
.col1 .chk { margin-top: 7px; display: flex; gap: 2px; align-items: center; color: #777; }
.chk input { appearance: none; width: 13px; height: 13px; margin: 0; border: 1px solid #bcbcbc; background: #fff url("data:image/svg+xml,%3Csvg xmlns='http://www.w3.org/2000/svg' width='11' height='11'%3E%3Cpath d='M2 5l3 3 4-6' fill='none' stroke='%23aaa' stroke-width='1.500'/%3E%3C/svg%3E"); }
.col2 p { padding-top: 16px; height: 38px; }
.preview { width: 221px; height: 182px; background: #212830; border: 1px solid #808080; border-right: 2px solid #fff; border-bottom: 2px solid #fff; }
.dim text { font: 700 11px "Liberation Sans"; fill: #fff; text-anchor: middle; }
fieldset { margin: 0; height: 62px; border: 1px solid #dcdcdc; padding: 0 0 0 9px; }
legend { padding: 0 2px; margin-left: -2px; }
.col3 { display: flex; flex-direction: column; justify-content: space-between; width: 75px; height: 133px; margin-top: 38px; margin-left: -5px; }
.dialog .col3 button, .dialog footer button { height: 19px; line-height: 15px; background: #e1e1e1; border: 1px solid #adadad; white-space: nowrap; }
.dialog footer { display: flex; justify-content: flex-end; gap: 12px; padding: 10px 10px 0 0; }
.dialog footer button { width: 73px; }

/* bottom */
.bottom { height: 29px; display: flex; justify-content: space-between; align-items: flex-start; background: #383838; font-family: "Noto Sans CJK SC", sans-serif; }
.layouts { display: flex; padding-left: 12px; }
.layouts a { height: 18px; line-height: 18px; padding: 0 12px; background: #4c4c4c; color: #aaa; clip-path: polygon(0 0, 100% 0, calc(100% - 8px) 100%, 8px 100%); }
.layouts .on { padding: 0 11px; background: linear-gradient(#666, #888); color: #fff; font-weight: 700; }
.layouts button { width: 22px; height: 16px; margin-left: 3px; border-radius: 2px 2px 10px 4px; background: #4c4c4c; font-weight: 700; }
.status { position: relative; height: 28px; display: flex; background: #3d3d3d; border: 1px solid #777; font-size: 12px; color: #fff; white-space: nowrap; }
.cell { display: flex; align-items: center; background: #4f4f4f; border: 1px solid #777; border-width: 0 1px 0 0; gap: 3px; padding: 0 0 1px 2px; }
.cell.coords { width: 182px; justify-content: flex-end; padding-right: 4px; }
.cell.model { width: 29px; }
.cell b { width: 22px; height: 22px; background: #5c8fc4; display: grid; place-items: center; }
.cell b.off { background: none; }
.cell b svg { width: 18px; height: 18px; }
.g1 { width: 67px; } .g2 { width: 155px; } .g3 { width: 64px; } .g4 { width: 116px; } .g5 { width: 106px; }
.g6 { width: 148px; } .g7 { width: 105px; } .g8 { width: 27px; } .g9 { width: 98px; } .g10 { width: 27px; }
.g11 { width: 38px; } .g12 { width: 26px; } .g13 { width: 27px; } .g14 { width: 26px; } .g15 { width: 50px; }
.g6 > span { font-family: "Open Sans"; margin: 0 2px; }
.g9 > .car { margin-left: auto; margin-right: 3px; }
.watermark { position: absolute; right: 1px; top: 5px; font: 16px/20px "Liberation Sans"; color: rgba(215, 215, 215, .8); }

/* other windows */
.behind { width: 8px; background: linear-gradient(#e6c84e 0 18px, #3a3f4a 18px 49px, #000 49px 66px, #e8eef5 66px 75px, #bbb 75px 105px, #777 105px 111px, #fff 111px 208px, #ccc 208px 226px, #fff 226px 567px, #555 567px 609px, #fff 609px 624px, #bbb 624px 633px, #e6f0fa 633px 640px, #000 640px 660px, #666 660px 671px, #262626 671px 717px, #ddd 717px 718px, #000 718px 733px, #ddd 733px 734px, #000 734px 755px, #222 755px 775px, #3c3c46 775px 839px, #fff 839px 860px, #080808 860px); }
.taskbar { height: 8px; background: #080808; position: relative; overflow: hidden; display: flex; justify-content: space-between; padding: 0 82px 0 343px; }
.taskbar i { width: 48px; height: 8px; background: #262626; }
.taskbar span { color: #fff; line-height: 20px; height: 8px; }
```
